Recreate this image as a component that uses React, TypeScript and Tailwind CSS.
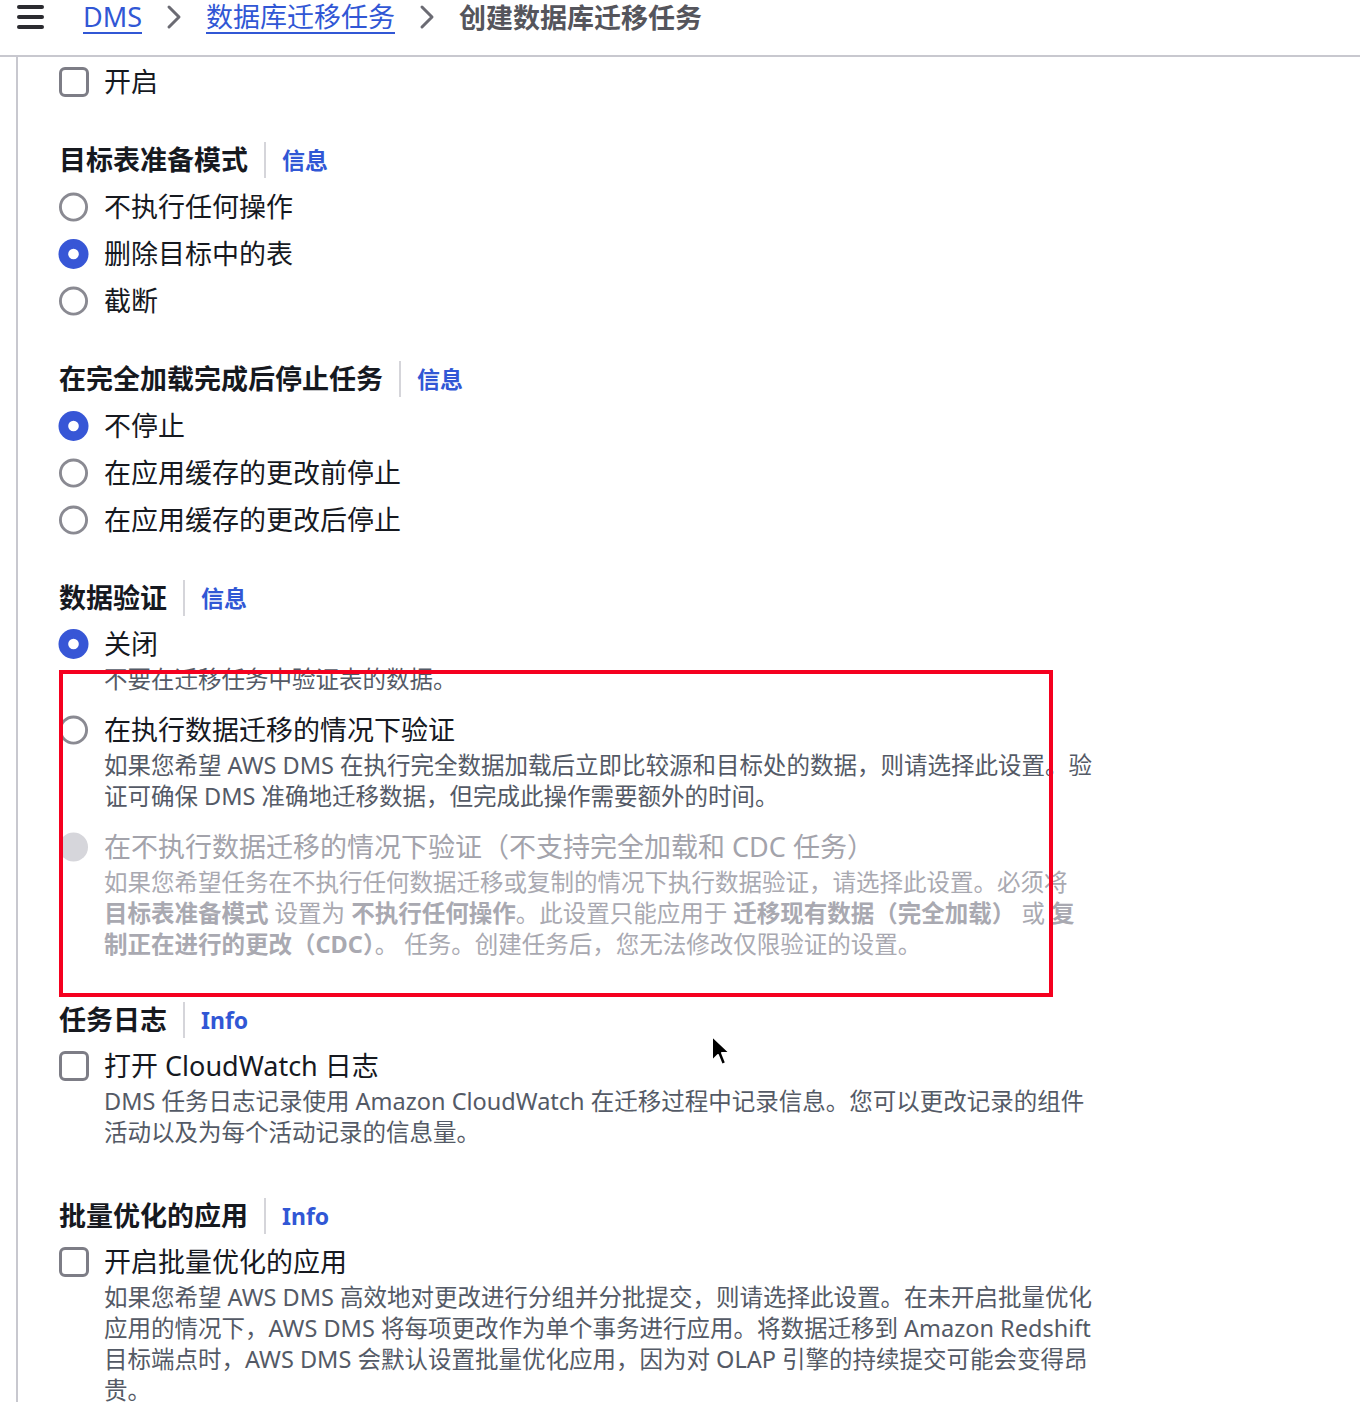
import React from 'react';

const FONT = "font-['Noto_Sans','Noto_Sans_CJK_SC',sans-serif]";

const Heading = ({ title, info }: { title: string; info: string }) => (
  <div className="flex items-center h-[40px]">
    <span className="text-[27px] font-bold text-[#16191f] leading-[40px]">{title}</span>
    <span className="mx-[16px] h-[36px] w-[2px] bg-[#d5d5da]"></span>
    <span className="text-[23px] font-bold text-[#3157d5] leading-[40px]">{info}</span>
  </div>
);

const Radio = ({ state }: { state: 'on' | 'off' | 'disabled' }) => (
  <svg width="32" height="32" viewBox="0 0 32 32" className="-ml-[1px]">
    {state === 'on' && (
      <>
        <circle cx="16" cy="16" r="15.5" fill="#3756d6" />
        <circle cx="16" cy="16" r="5.5" fill="#ffffff" />
      </>
    )}
    {state === 'off' && <circle cx="16" cy="16" r="13.5" fill="none" stroke="#8a8a92" strokeWidth="3" />}
    {state === 'disabled' && <circle cx="16" cy="16" r="15" fill="#d6d6db" />}
  </svg>
);

const Checkbox = () => (
  <div className="w-[30px] h-[30px] rounded-[6px] border-[3px] border-[#7d7d86] bg-white"></div>
);

const Option = ({
  control,
  label,
  disabled,
  children,
}: {
  control: React.ReactNode;
  label: string;
  disabled?: boolean;
  children?: React.ReactNode;
}) => (
  <div>
    <div className="flex items-center h-[40px]">
      <div className="w-[30px] flex items-center justify-center">{control}</div>
      <span className={`ml-[15px] text-[27px] leading-[40px] whitespace-nowrap ${disabled ? 'text-[#a3a3ab]' : 'text-[#16191f]'}`}>
        {label}
      </span>
    </div>
    {children && (
      <div className={`pl-[45px] text-[23.5px] leading-[31px] ${disabled ? 'text-[#a9a9b1]' : 'text-[#545a66]'}`}>
        {children}
      </div>
    )}
  </div>
);

const Line = ({ children }: { children: React.ReactNode }) => <div className="whitespace-nowrap">{children}</div>;

const Chevron = () => (
  <svg width="16" height="26" viewBox="0 0 16 26" className="mx-[24px]">
    <polyline points="3,3 13,13 3,23" fill="none" stroke="#6b6b73" strokeWidth="3" strokeLinecap="round" strokeLinejoin="round" />
  </svg>
);

export default function App() {
  return (
    <div className={`relative w-[1360px] h-[1402px] overflow-hidden bg-white ${FONT}`}>
      {/* top bar */}
      <div className="h-[57px] border-b-2 border-[#c8c8cf] flex items-start pl-[17px]">
        <div className="flex flex-col gap-[6px] mt-[5px] w-[27px]">
          <span className="h-[4px] bg-[#2b2b30] rounded-sm"></span>
          <span className="h-[4px] bg-[#2b2b30] rounded-sm"></span>
          <span className="h-[4px] bg-[#2b2b30] rounded-sm"></span>
        </div>
        <div className="flex items-center ml-[39px] h-[34px] text-[27px] leading-[31px]">
          <span className="text-[#3157d5] border-b-2 border-[#3157d5]">DMS</span>
          <Chevron />
          <span className="text-[#3157d5] border-b-2 border-[#3157d5]">数据库迁移任务</span>
          <Chevron />
          <span className="text-[#55555c] font-semibold">创建数据库迁移任务</span>
        </div>
      </div>

      <div className="flex">
        <div className="ml-[16px] w-[2px] bg-[#c8c8cf] min-h-[1345px]"></div>

        <div className="pl-[41px] pt-[5px] flex flex-col">
          <Option control={<Checkbox />} label="开启" />

          <div className="mt-[38px] flex flex-col gap-[7px]">
            <Heading title="目标表准备模式" info="信息" />
            <Option control={<Radio state="off" />} label="不执行任何操作" />
            <Option control={<Radio state="on" />} label="删除目标中的表" />
            <Option control={<Radio state="off" />} label="截断" />
          </div>

          <div className="mt-[38px] flex flex-col gap-[7px]">
            <Heading title="在完全加载完成后停止任务" info="信息" />
            <Option control={<Radio state="on" />} label="不停止" />
            <Option control={<Radio state="off" />} label="在应用缓存的更改前停止" />
            <Option control={<Radio state="off" />} label="在应用缓存的更改后停止" />
          </div>

          <div className="mt-[38px] flex flex-col">
            <Heading title="数据验证" info="信息" />
            <div className="mt-[6px] flex flex-col gap-[15px]">
              <Option control={<Radio state="on" />} label="关闭">
                <Line>不要在迁移任务中验证表的数据。</Line>
              </Option>
              <Option control={<Radio state="off" />} label="在执行数据迁移的情况下验证">
                <Line>如果您希望 AWS DMS 在执行完全数据加载后立即比较源和目标处的数据，则请选择此设置。验</Line>
                <Line>证可确保 DMS 准确地迁移数据，但完成此操作需要额外的时间。</Line>
              </Option>
              <Option control={<Radio state="disabled" />} label="在不执行数据迁移的情况下验证（不支持完全加载和 CDC 任务）" disabled>
                <Line>如果您希望任务在不执行任何数据迁移或复制的情况下执行数据验证，请选择此设置。必须将</Line>
                <Line>
                  <b>目标表准备模式</b> 设置为 <b>不执行任何操作</b>。此设置只能应用于 <b>迁移现有数据（完全加载）</b> 或 <b>复</b>
                </Line>
                <Line>
                  <b>制正在进行的更改（CDC）</b>。 任务。创建任务后，您无法修改仅限验证的设置。
                </Line>
              </Option>
            </div>
          </div>

          <div className="mt-[40px] flex flex-col gap-[6px]">
            <Heading title="任务日志" info="Info" />
            <Option control={<Checkbox />} label="打开 CloudWatch 日志">
              <Line>DMS 任务日志记录使用 Amazon CloudWatch 在迁移过程中记录信息。您可以更改记录的组件</Line>
              <Line>活动以及为每个活动记录的信息量。</Line>
            </Option>
          </div>

          <div className="mt-[48px] flex flex-col gap-[6px]">
            <Heading title="批量优化的应用" info="Info" />
            <Option control={<Checkbox />} label="开启批量优化的应用">
              <Line>如果您希望 AWS DMS 高效地对更改进行分组并分批提交，则请选择此设置。在未开启批量优化</Line>
              <Line>应用的情况下，AWS DMS 将每项更改作为单个事务进行应用。将数据迁移到 Amazon Redshift</Line>
              <Line>目标端点时，AWS DMS 会默认设置批量优化应用，因为对 OLAP 引擎的持续提交可能会变得昂</Line>
              <Line>贵。</Line>
            </Option>
          </div>
        </div>
      </div>

      {/* red highlight annotation */}
      <div className="absolute left-[59px] top-[670px] w-[994px] h-[327px] border-4 border-[#f5001f] pointer-events-none"></div>

      {/* mouse cursor */}
      <svg className="absolute left-[709px] top-[1034px]" width="24" height="36" viewBox="0 0 24 36">
        <path d="M3 2 L3 27 L9 21 L13 31 L17 29 L13 19 L21 19 Z" fill="#000" stroke="#fff" strokeWidth="2" strokeLinejoin="round" />
      </svg>
    </div>
  );
}
